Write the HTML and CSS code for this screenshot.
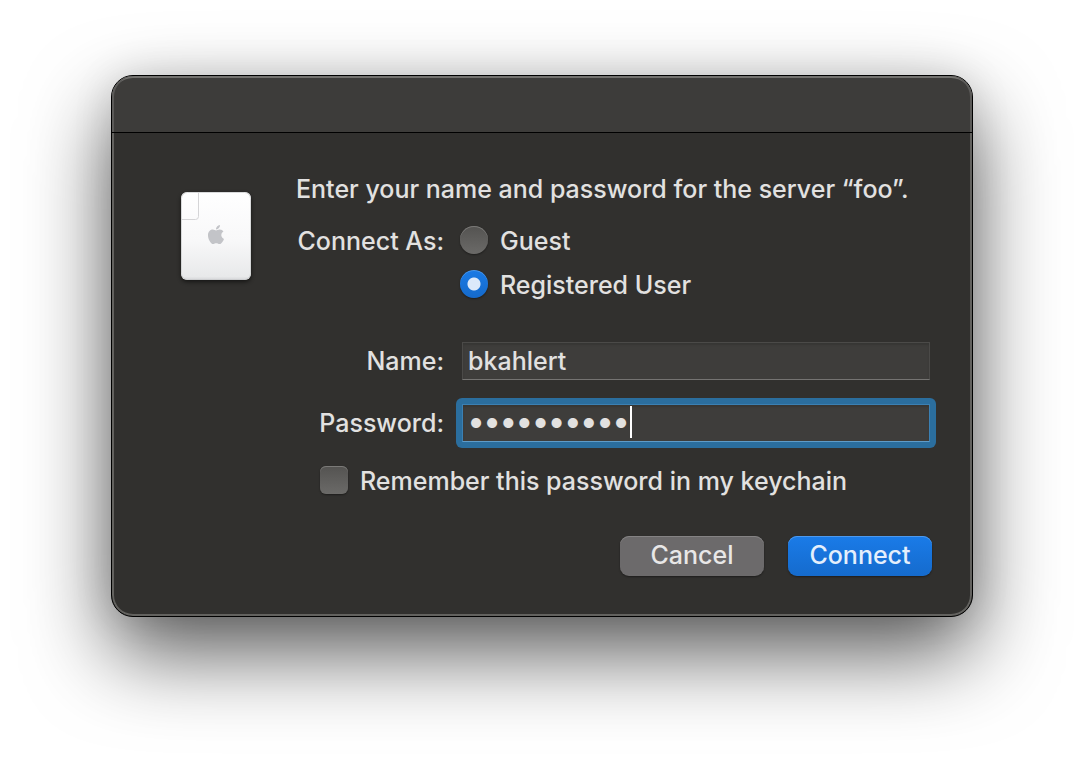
FILE: index.html
```html
<!DOCTYPE html>
<html lang="en">
<head>
<meta charset="utf-8">
<title>Connect to server</title>
<link rel="stylesheet" href="styles.css">
</head>
<body>
<main class="window">
  <header class="titlebar"></header>
  <div class="content">
    <svg class="device" viewBox="0 0 82 104" aria-hidden="true">
      <defs>
        <linearGradient id="shell" x1="0" y1="0" x2="0" y2="1">
          <stop offset="0" stop-color="#ffffff"/>
          <stop offset=".55" stop-color="#f8f8f9"/>
          <stop offset=".96" stop-color="#e8e9ea"/>
          <stop offset="1" stop-color="#d4d5d7"/>
        </linearGradient>
        <filter id="soft" x="-20%" y="-20%" width="140%" height="140%"><feGaussianBlur stdDeviation="2"/></filter>
      </defs>
      <rect x="6" y="10" width="70" height="88" rx="6" fill="#000" opacity=".55" filter="url(#soft)"/>
      <rect x="6" y="8" width="70" height="88" rx="6" fill="url(#shell)"/>
      <rect x="6.500" y="8.500" width="69" height="87" rx="6" fill="none" stroke="#c9cacc" stroke-opacity=".7"/>
      <path d="M23.500 8.500v24q0 3-3 3H6.500" fill="none" stroke="#d5d5d7"/>
      <path transform="translate(32.800 39.600) scale(.0425)" fill="#c3c4c8" d="M318.700 268.700c-.2-36.700 16.400-64.400 50-84.800-18.800-26.900-47.200-41.700-84.700-44.600-35.500-2.800-74.300 20.700-88.500 20.700-15 0-49.400-19.700-76.400-19.700C63.300 141.200 4 184.800 4 273.500q0 39.300 14.400 81.200c12.800 36.700 59 126.700 107.200 125.200 25.200-.6 43-17.900 75.800-17.900 31.800 0 48.300 17.900 76.400 17.900 48.600-.7 90.400-82.500 102.600-119.300-65.200-30.700-61.700-90-61.700-91.900zm-56.600-164.200c27.300-32.400 24.800-61.900 24-72.500-24.100 1.400-52 16.400-67.900 34.900-17.500 19.800-27.800 44.300-25.600 71.900 26.100 2 49.900-11.400 69.500-34.300z"/>
    </svg>
    <form class="form">
      <h1 class="prompt">Enter your name and password for the server “foo”.</h1>
      <div class="row" role="radiogroup" aria-labelledby="connect-as">
        <span class="label" id="connect-as">Connect As:</span>
        <div class="choices">
          <label class="choice"><input class="radio" type="radio" name="as"><span>Guest</span></label>
          <label class="choice"><input class="radio" type="radio" name="as" checked><span>Registered User</span></label>
        </div>
      </div>
      <div class="row name-row">
        <label class="label" for="name">Name:</label>
        <div class="field"><input class="text" id="name" type="text" value="bkahlert"></div>
      </div>
      <div class="row password-row">
        <label class="label" for="password">Password:</label>
        <div class="field focused"><input class="text secret" id="password" type="password" value="0123456789"><span class="caret"></span></div>
      </div>
      <label class="choice remember"><input class="checkbox" type="checkbox"><span>Remember this password in my keychain</span></label>
      <div class="buttons">
        <button class="button" type="button">Cancel</button>
        <button class="button primary" type="submit">Connect</button>
      </div>
    </form>
  </div>
</main>
</body>
</html>
```
FILE: styles.css
```css
* { box-sizing: border-box; }
body {
  margin: 0;
  padding: 75px 111px 147px;
  background: #fff;
  color: #e2e1e0;
  font: 500 25px/32px Inter, "Liberation Sans", sans-serif;
}
.window {
  border: 1px solid #000;
  border-radius: 22px;
  background: #31302e;
  box-shadow: inset 0 0 0 2px #63625f, 0 36px 84px rgba(0, 0, 0, .65), 0 0 40px rgba(0, 0, 0, .1);
}
.titlebar {
  height: 57px;
  border-bottom: 1px solid #000;
  border-radius: 21px 21px 0 0;
  background: #3d3c3a;
  box-shadow: inset 2px 0 #5b5a58, inset -2px 0 #5b5a58, inset 0 2px #73726f;
}
.content {
  display: flex;
  align-items: flex-start;
  gap: 39px;
  padding: 40px 40px 40px 63px;
}
.device { flex: none; width: 82px; height: 104px; margin-top: 11px; }
.form { flex: 1; min-width: 0; }
.prompt { margin: 0 0 20px; font-size: inherit; font-weight: inherit; white-space: nowrap; }
.row { display: grid; grid-template-columns: 148px 1fr; column-gap: 16px; }
.label { text-align: right; white-space: nowrap; justify-self: end; }
.choices { display: flex; flex-direction: column; gap: 12px; }
.choice { display: flex; align-items: center; gap: 12px; }
.name-row { align-items: center; margin-top: 41px; }
.password-row { align-items: center; margin-top: 24px; }
.radio, .checkbox {
  appearance: none;
  flex: none;
  width: 28px;
  height: 28px;
  margin: 0 0 2px;
  background: linear-gradient(#545351, #6b6a68);
  box-shadow: inset 0 1px #7b7a78, 0 1px 2px rgba(0, 0, 0, .4);
}
.radio { border-radius: 50%; }
.checkbox { border-radius: 6px; }
.radio:checked {
  background: radial-gradient(circle, #dce9fa 6px, transparent 7px), linear-gradient(#1a7ae5, #156acb);
  box-shadow: inset 0 1px #4b98ec, 0 1px 2px rgba(0, 0, 0, .4);
}
.field { position: relative; padding: 0 2px; }
.text {
  display: block;
  width: 100%;
  height: 38px;
  padding: 0 5px;
  border: 1px solid #4b4a48;
  border-bottom-color: #757472;
  border-radius: 0;
  outline: none;
  background: #3e3d3b;
  box-shadow: inset 0 2px 2px rgba(0, 0, 0, .12);
  color: inherit;
  font: inherit;
}
.focused::before {
  content: "";
  position: absolute;
  inset: -6px -4px;
  border-radius: 6px;
  background: #2b6e9e;
}
.secret {
  position: relative;
  padding: 0 5px 6px;
  border-color: #3b80b3;
  border-bottom-color: #5f9cc8;
  font-size: 32px;
  font-weight: 600;
}
.caret { position: absolute; left: 170px; top: 2px; width: 2px; height: 32px; background: #fff; }
.remember { margin: 23px 0 0 24px; }
.buttons { display: flex; justify-content: flex-end; gap: 24px; margin-top: 39px; }
.button {
  width: 144px;
  height: 40px;
  padding: 0 0 2px;
  border: 0;
  border-radius: 9px;
  background: #6c6a6b;
  box-shadow: inset 0 1px #858384, 0 1px 2px rgba(0, 0, 0, .4);
  color: #e8e7e7;
  font: inherit;
}
.primary {
  background: linear-gradient(#1a7be8, #156bcd);
  box-shadow: inset 0 1px #4d99ee, 0 1px 2px rgba(0, 0, 0, .4);
  color: #e4effc;
}
```
